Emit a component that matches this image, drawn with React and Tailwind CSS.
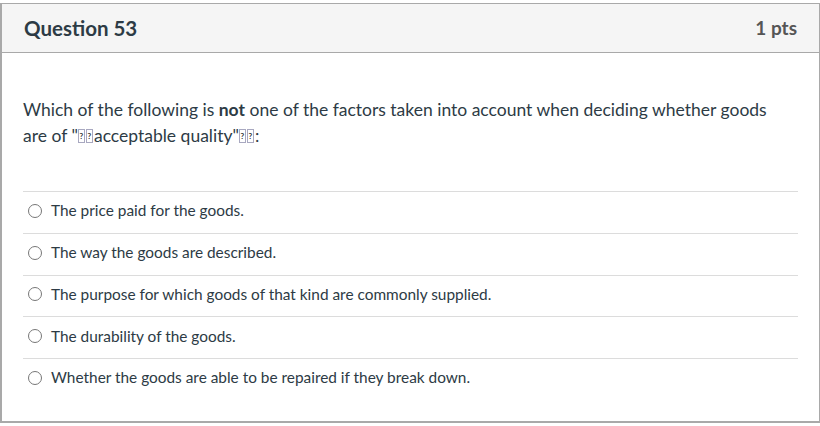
const answers = [
  'The price paid for the goods.',
  'The way the goods are described.',
  'The purpose for which goods of that kind are commonly supplied.',
  'The durability of the goods.',
  'Whether the goods are able to be repaired if they break down.',
]

function Tofu() {
  return (
    <span className="inline-block align-[-1px] w-[7px] h-[14px] border border-[#a8a8c0] text-[8px] leading-[12px] text-center font-bold text-[#333] mr-[1px] overflow-hidden">
      ?
    </span>
  )
}

export default function App() {
  return (
    <div className="bg-white w-[820px] h-[426px] pt-[3px] font-['Lato','Noto_Sans',sans-serif] text-[#2d3b45]">
      <div className="h-[420px] border-l-2 border-r border-t border-b-2 border-[#a9a9a9] flex flex-col">
        <div className="h-[49px] bg-[#f5f5f5] border-b border-[#a9a9a9] flex items-center justify-between pl-[22px] pr-[22px]">
          <h2 className="text-[20.5px] font-bold text-[#2d3b45]">Question 53</h2>
          <span className="text-[19px] font-bold text-[#555]">1 pts</span>
        </div>
        <div className="px-[21px] pt-[44px]">
          <p className="max-w-[760px] text-[17.5px] leading-[26px] text-[#2d3b45]">
            Which of the following is <strong>not</strong> one of the factors taken into account when deciding whether goods are of "<Tofu /><Tofu />acceptable quality"<Tofu /><Tofu />:
          </p>
          <div className="mt-[42px]">
            {answers.map((a) => (
              <div key={a} className="h-[41.75px] pb-[3px] border-t border-[#dcdcdc] flex items-center gap-[9px] pl-[5px] text-[15.4px] text-[#2d3b45]">
                <span className="w-[14px] h-[14px] rounded-full border border-[#777] bg-white shrink-0" />
                <span>{a}</span>
              </div>
            ))}
          </div>
        </div>
      </div>
    </div>
  )
}
